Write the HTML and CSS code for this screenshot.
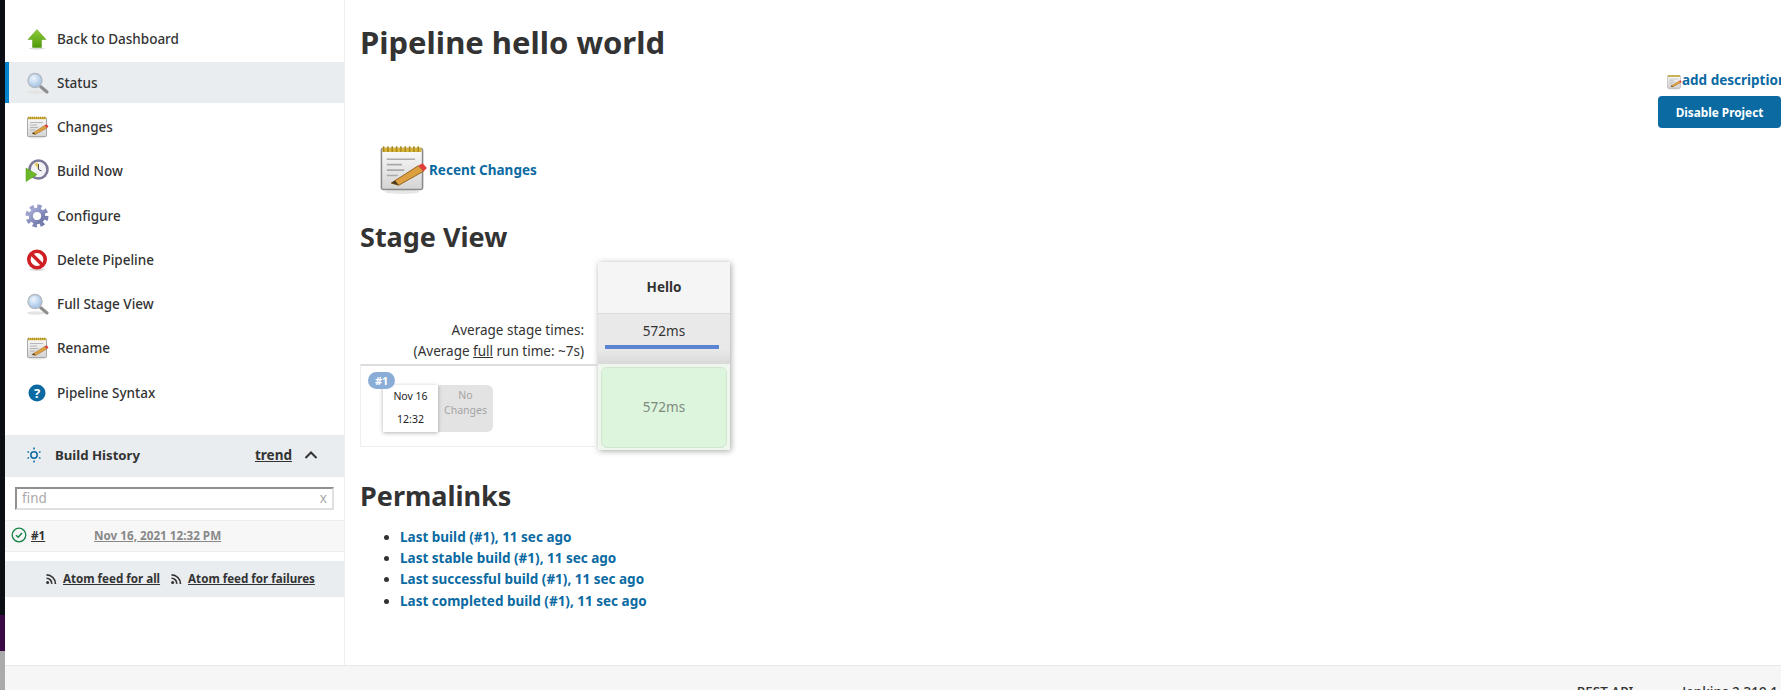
FILE: index.html
```html
<!DOCTYPE html>
<html lang="en">
<head>
  <meta charset="UTF-8" />
  <title>hello world [Jenkins]</title>
  <link rel="stylesheet" href="styles.css">
</head>
<body>
  <svg class="defs" width="0" height="0">
    <defs>
      <linearGradient id="gArrow" x1="0" y1="0" x2="0" y2="1"><stop offset="0" stop-color="#8fcb3c"/><stop offset="1" stop-color="#4e9a06"/></linearGradient>
      <radialGradient id="gLens" cx="0.4" cy="0.35" r="0.8"><stop offset="0" stop-color="#eef5fc"/><stop offset="1" stop-color="#8fb6e0"/></radialGradient>
      <linearGradient id="gPage" x1="0" y1="0" x2="0" y2="1"><stop offset="0" stop-color="#fafafa"/><stop offset="1" stop-color="#d4d4d4"/></linearGradient>
      <linearGradient id="gGear" x1="0" y1="0" x2="1" y2="1"><stop offset="0" stop-color="#a5abd4"/><stop offset="1" stop-color="#6d74a8"/></linearGradient>
      <symbol id="i-arrow" viewBox="0 0 24 24">
        <ellipse cx="12" cy="21.5" rx="8" ry="1.2" fill="#ddd"/>
        <path d="M12 2.500 21 12.500H16.500V20.500H7.500V12.500H3Z" fill="url(#gArrow)" stroke="#5c9e1f" stroke-width=".5"/>
      </symbol>
      <symbol id="i-lens" viewBox="0 0 24 24">
        <ellipse cx="11" cy="21" rx="9" ry="1.800" fill="#e4e4e4"/>
        <path d="M15.500 15.500 22 21" stroke="#8d8d8d" stroke-width="3" stroke-linecap="round"/>
        <circle cx="10" cy="9.500" r="7" fill="url(#gLens)" stroke="#b4bac2" stroke-width="1.400"/>
      </symbol>
      <symbol id="i-note" viewBox="0 0 24 24">
        <ellipse cx="12" cy="22.500" rx="8" ry="1" fill="#e6e6e6"/>
        <rect x="2.500" y="2.500" width="19" height="19" rx=".8" fill="url(#gPage)" stroke="#8a8a8a" stroke-width=".7"/>
        <path d="M3 2.200h18v2H3Z" fill="#d8b53c"/>
        <path d="M3.500 1.500v2.600M5.500 1.500v2.600M7.500 1.500v2.600M9.500 1.500v2.600M11.500 1.500v2.600M13.500 1.500v2.600M15.500 1.500v2.600M17.500 1.500v2.600M19.500 1.500v2.600" stroke="#a88a1c" stroke-width=".7"/>
        <path d="M5 7.500h13M5 10h7M5 12.500h8M5 15h5" stroke="#aaa" stroke-width=".8"/>
        <path d="M7 18.500 19.500 10.500 22 13 10.500 19.500Z" fill="#dca040" stroke="#8a5a14" stroke-width=".4"/>
        <path d="M7 18.500 8.800 17.300 10.500 19.500Z" fill="#4a3a20"/>
        <path d="M19.500 10.500 22 13 23.500 11.500 21.500 9.300Z" fill="#e23c3c"/>
      </symbol>
      <symbol id="i-build" viewBox="0 0 24 24">
        <circle cx="13.500" cy="10.500" r="9" fill="#f3f2f5" stroke="#7d7a99" stroke-width="2.600"/>
        <path d="M13.500 10.500 9 4.500 13 3.500Z" fill="#e0cc6a"/>
        <path d="M13.500 5v5.500l3 1.500" stroke="#555" stroke-width="1" fill="none"/>
        <path d="M1 9 12 15.500 1 22.500Z" fill="#6cb82a" stroke="#4e9a06" stroke-width=".5"/>
      </symbol>
      <symbol id="i-gear" viewBox="0 0 24 24">
        <circle cx="12" cy="12" r="9.500" fill="none" stroke="url(#gGear)" stroke-width="4" stroke-dasharray="4.200 3.260"/>
        <circle cx="12" cy="12" r="6.200" fill="none" stroke="url(#gGear)" stroke-width="4.200"/>
      </symbol>
      <symbol id="i-stop" viewBox="0 0 24 24">
        <ellipse cx="12" cy="21.500" rx="8" ry="1.500" fill="#ddd"/>
        <circle cx="12" cy="11.500" r="8.200" fill="#fff" stroke="#cf1f25" stroke-width="3.600"/>
        <path d="M6 5.500 18 17.500" stroke="#cf1f25" stroke-width="3.400"/>
      </symbol>
      <symbol id="i-rss" viewBox="0 0 16 16">
        <circle cx="3.500" cy="12.500" r="2" fill="#333"/>
        <path d="M2 7a7 7 0 0 1 7 7.500M2 2.500a12 12 0 0 1 12 12" fill="none" stroke="#333" stroke-width="2.200"/>
      </symbol>
    </defs>
  </svg>

  <div class="desktop-edge">
    <div class="edge-dark"></div>
    <div class="edge-purple"></div>
    <div class="edge-grey"></div>
  </div>

  <div class="page">
    <div class="content">
      <aside class="sidebar">
        <nav class="tasks">
          <a class="task"><svg class="task-icon"><use href="#i-arrow"/></svg>Back to Dashboard</a>
          <a class="task task-active"><svg class="task-icon"><use href="#i-lens"/></svg>Status</a>
          <a class="task"><svg class="task-icon"><use href="#i-note"/></svg>Changes</a>
          <a class="task"><svg class="task-icon"><use href="#i-build"/></svg>Build Now</a>
          <a class="task"><svg class="task-icon"><use href="#i-gear"/></svg>Configure</a>
          <a class="task"><svg class="task-icon"><use href="#i-stop"/></svg>Delete Pipeline</a>
          <a class="task"><svg class="task-icon"><use href="#i-lens"/></svg>Full Stage View</a>
          <a class="task"><svg class="task-icon"><use href="#i-note"/></svg>Rename</a>
          <a class="task">
            <svg class="task-icon" viewBox="0 0 24 24">
              <circle cx="12" cy="12" r="8.500" fill="#0b6aa2"/>
              <text x="12" y="16.500" class="help-mark">?</text>
            </svg>Pipeline Syntax
          </a>
        </nav>

        <section class="history">
          <div class="history-head">
            <svg class="history-icon" viewBox="0 0 16 16" fill="none" stroke="#0b6aa2" stroke-width="1.500">
              <circle cx="8" cy="8" r="3.200"/>
              <path d="M8 .5v2M8 13.500v2M1.500 4.500l1.500 1M13 10.500l1.500 1M1.500 11.500l1.500-1M13 5.500l1.500-1"/>
            </svg>
            <span class="history-title">Build History</span>
            <a class="history-trend">trend</a>
            <svg class="history-chevron" viewBox="0 0 14 10" fill="none" stroke="#333" stroke-width="2">
              <path d="M1.500 8 7 2.500 12.500 8"/>
            </svg>
          </div>
          <div class="history-search">
            <span class="find-text">find</span>
            <span class="find-clear">x</span>
          </div>
          <div class="history-row">
            <svg class="build-ok" viewBox="0 0 16 16" fill="none" stroke="#138347">
              <circle cx="8" cy="8" r="6.800" stroke-width="1.300"/>
              <path d="M5 8.300 7.200 10.300 11 6" stroke-width="1.500"/>
            </svg>
            <a class="build-num">#1</a>
            <a class="build-date">Nov 16, 2021 12:32 PM</a>
          </div>
          <div class="history-feeds">
            <svg class="rss"><use href="#i-rss"/></svg><a class="feed">Atom feed for all</a>
            <svg class="rss rss-second"><use href="#i-rss"/></svg><a class="feed">Atom feed for failures</a>
          </div>
        </section>
      </aside>

      <main class="main">
        <h1 class="title">Pipeline hello world</h1>

        <div class="actions">
          <a class="add-desc"><svg class="add-desc-icon"><use href="#i-note"/></svg>add description</a>
          <button class="disable-btn">Disable Project</button>
        </div>

        <div class="recent">
          <svg class="recent-icon"><use href="#i-note"/></svg>
          <a class="link recent-link">Recent Changes</a>
        </div>

        <h2 class="heading stage-heading">Stage View</h2>

        <div class="stage-view">
          <div class="stage-left">
            <div class="avg-text">
              Average stage times:<br>
              (Average <span class="avg-full">full</span> run time: ~7s)
            </div>
            <div class="build-line">
              <span class="badge">#1</span>
              <div class="date-card">
                <span>Nov 16</span>
                <span>12:32</span>
              </div>
              <div class="no-changes">No Changes</div>
            </div>
          </div>
          <div class="stage-col">
            <div class="stage-name">Hello</div>
            <div class="stage-avg">
              <span>572ms</span>
              <div class="stage-bar"></div>
            </div>
            <div class="stage-cell">572ms</div>
          </div>
        </div>

        <h2 class="heading perma-heading">Permalinks</h2>
        <ul class="permalinks">
          <li><a class="link">Last build (#1), 11 sec ago</a></li>
          <li><a class="link">Last stable build (#1), 11 sec ago</a></li>
          <li><a class="link">Last successful build (#1), 11 sec ago</a></li>
          <li><a class="link">Last completed build (#1), 11 sec ago</a></li>
        </ul>
      </main>
    </div>

    <footer class="footer">
      <a>REST API</a>
      <a>Jenkins 2.319.1</a>
    </footer>
  </div>
</body>
</html>
```

FILE: styles.css
```css
body {
  margin: 0;
  height: 690px;
  display: flex;
  overflow: hidden;
  font-family: "Noto Sans", "Open Sans", sans-serif;
  font-size: 13.500px;
  color: #333;
  background-color: #fff;
}
a {
  color: inherit;
}
.defs {
  position: absolute;
}
.desktop-edge {
  width: 5px;
  display: flex;
  flex-direction: column;
}
.edge-dark {
  height: 615px;
  background-color: #0b0f14;
}
.edge-purple {
  height: 36px;
  background-color: #3b0a46;
}
.edge-grey {
  flex: 1;
  background-color: #aaa;
}
.page {
  flex: 1;
  min-width: 0;
  display: flex;
  flex-direction: column;
}
.content {
  height: 665px;
  flex: none;
  display: flex;
}

/* side panel */
.sidebar {
  width: 339px;
  flex-shrink: 0;
  border-right: 1px solid #eee;
  padding-top: 18px;
}
.task {
  height: 41px;
  margin-bottom: 3.250px;
  padding-left: 20px;
  display: flex;
  align-items: center;
  font-weight: 500;
}
.task-active {
  background-color: #e9edf0;
  border-left: 4px solid #0083cf;
  padding-left: 16px;
}
.task-icon {
  width: 24px;
  height: 24px;
  margin-right: 8px;
  flex-shrink: 0;
}
.help-mark {
  font-size: 13px;
  font-weight: 700;
  fill: #fff;
  text-anchor: middle;
}
.history {
  margin-top: 21.500px;
}
.history-head {
  height: 42px;
  box-sizing: border-box;
  padding: 0 0 2px 21px;
  background-color: #e9edf0;
  display: flex;
  align-items: center;
}
.history-icon {
  width: 16px;
  height: 16px;
  margin-right: 13px;
}
.history-title {
  font-size: 13.200px;
  font-weight: 700;
  flex: 1;
}
.history-trend {
  font-weight: 700;
  text-decoration: underline;
  margin-right: 12px;
}
.history-chevron {
  width: 14px;
  height: 10px;
  margin-right: 26px;
}
.history-search {
  margin: 10px;
  height: 23px;
  box-sizing: border-box;
  border: 2px solid #e0e0e0;
  border-top-color: #909090;
  border-left-color: #909090;
  padding: 0 5px;
  display: flex;
  justify-content: space-between;
  align-items: center;
  color: #aaa;
}
.history-row {
  height: 32px;
  box-sizing: border-box;
  background-color: #f7f7f7;
  border-top: 1px solid #eee;
  border-bottom: 1px solid #eee;
  display: flex;
  align-items: center;
  padding: 0 0 2px 6px;
  font-size: 11.700px;
  font-weight: 700;
}
.build-ok {
  width: 16px;
  height: 16px;
  margin-right: 4px;
}
.build-num {
  width: 63px;
  text-decoration: underline;
}
.build-date {
  color: #888;
  text-decoration: underline;
}
.history-feeds {
  margin-top: 9px;
  height: 36px;
  background-color: #e9edf0;
  display: flex;
  align-items: center;
  padding-left: 40px;
  font-size: 11.600px;
  font-weight: 700;
}
.rss {
  width: 12px;
  height: 12px;
  margin-right: 6px;
}
.rss-second {
  margin-left: 10px;
}
.feed {
  text-decoration: underline;
}

/* main column */
.main {
  flex: 1;
  min-width: 0;
  overflow: hidden;
  padding-left: 15px;
}
.title {
  margin: 22px 0 0;
  height: 40px;
  line-height: 40px;
  font-size: 31px;
  font-weight: 700;
}
.actions {
  width: 123px;
  margin-left: auto;
  margin-top: 10px;
  display: flex;
  flex-direction: column;
  align-items: flex-start;
}
.add-desc {
  margin: 0 0 8px 8px;
  height: 16px;
  display: flex;
  align-items: center;
  white-space: nowrap;
  color: #0b6aa2;
  font-weight: 700;
}
.add-desc-icon {
  width: 16px;
  height: 16px;
  flex: none;
  margin-top: 4px;
}
.disable-btn {
  width: 123px;
  height: 32px;
  background-color: #0b6aa2;
  color: #fff;
  border: none;
  border-radius: 4px;
  font: 700 11.800px "Noto Sans", sans-serif;
}
.recent {
  margin: 17px 0 0 16px;
  height: 48px;
  display: flex;
  align-items: center;
}
.recent-icon {
  width: 52px;
  height: 52px;
  margin-right: 1px;
}
.recent-link {
  padding-top: 2px;
}
.link {
  color: #0b6aa2;
  font-weight: 700;
}
.heading {
  margin: 0;
  height: 34px;
  line-height: 34px;
  font-size: 27px;
  font-weight: 700;
}
.stage-heading {
  margin-top: 27px;
}

/* stage view */
.stage-view {
  margin-top: 8px;
  display: flex;
}
.stage-left {
  width: 238px;
  padding-top: 58px;
}
.avg-text {
  height: 44px;
  text-align: right;
  padding-right: 14px;
  line-height: 21px;
}
.avg-full {
  text-decoration: underline;
}
.build-line {
  height: 83px;
  box-sizing: border-box;
  position: relative;
  border: 1px solid #eee;
  border-top: 2px solid #ddd;
  border-right: none;
  padding: 19px 0 0 22px;
  display: flex;
  align-items: flex-start;
  font-size: 10.500px;
}
.badge {
  position: absolute;
  top: 6px;
  left: 7px;
  padding: 0 7px;
  height: 17px;
  line-height: 17px;
  border-radius: 9px;
  background-color: #89add6;
  color: #fff;
  font-weight: 700;
  font-size: 11px;
  z-index: 1;
}
.date-card {
  width: 55px;
  height: 47px;
  box-sizing: border-box;
  padding-bottom: 2px;
  background-color: #fff;
  color: #222;
  box-shadow: 0 1px 4px rgba(0, 0, 0, 0.3);
  display: flex;
  flex-direction: column;
  justify-content: space-around;
  align-items: center;
  position: relative;
}
.no-changes {
  width: 55px;
  height: 47px;
  box-sizing: border-box;
  background-color: #e3e3e3;
  color: #a5a5a5;
  border-radius: 0 6px 6px 0;
  text-align: center;
  padding-top: 3px;
  line-height: 15px;
}
.stage-col {
  width: 132px;
  box-shadow: 1px 1px 6px rgba(0, 0, 0, 0.35);
  background-color: #eef6ee;
}
.stage-name {
  height: 51px;
  line-height: 51px;
  text-align: center;
  font-weight: 700;
  background-color: #f5f5f5;
  border-bottom: 1px solid #ddd;
}
.stage-avg {
  height: 50px;
  box-sizing: border-box;
  padding-top: 7px;
  text-align: center;
  background: linear-gradient(#e9e9e9 70%, #d9d9d9);
  line-height: 20px;
}
.stage-bar {
  height: 4px;
  margin: 4px 11px 0 7px;
  background-color: #5b85d3;
}
.stage-cell {
  height: 81px;
  line-height: 79px;
  box-sizing: border-box;
  margin: 3px 3px 2px;
  border: 1px solid #cfe6cf;
  border-radius: 6px;
  background-color: #dcf5dc;
  text-align: center;
  color: #7f8a7f;
}

/* permalinks */
.perma-heading {
  margin-top: 29px;
}
.permalinks {
  margin: 14px 0 0;
  padding-left: 40px;
  line-height: 21.200px;
}

.footer {
  flex: 1;
  background-color: #f6f6f6;
  border-top: 1px solid #e8e8e8;
  display: flex;
  justify-content: flex-end;
  gap: 49px;
  padding: 17px 3px 0 0;
  font-weight: 500;
  white-space: nowrap;
}
```
